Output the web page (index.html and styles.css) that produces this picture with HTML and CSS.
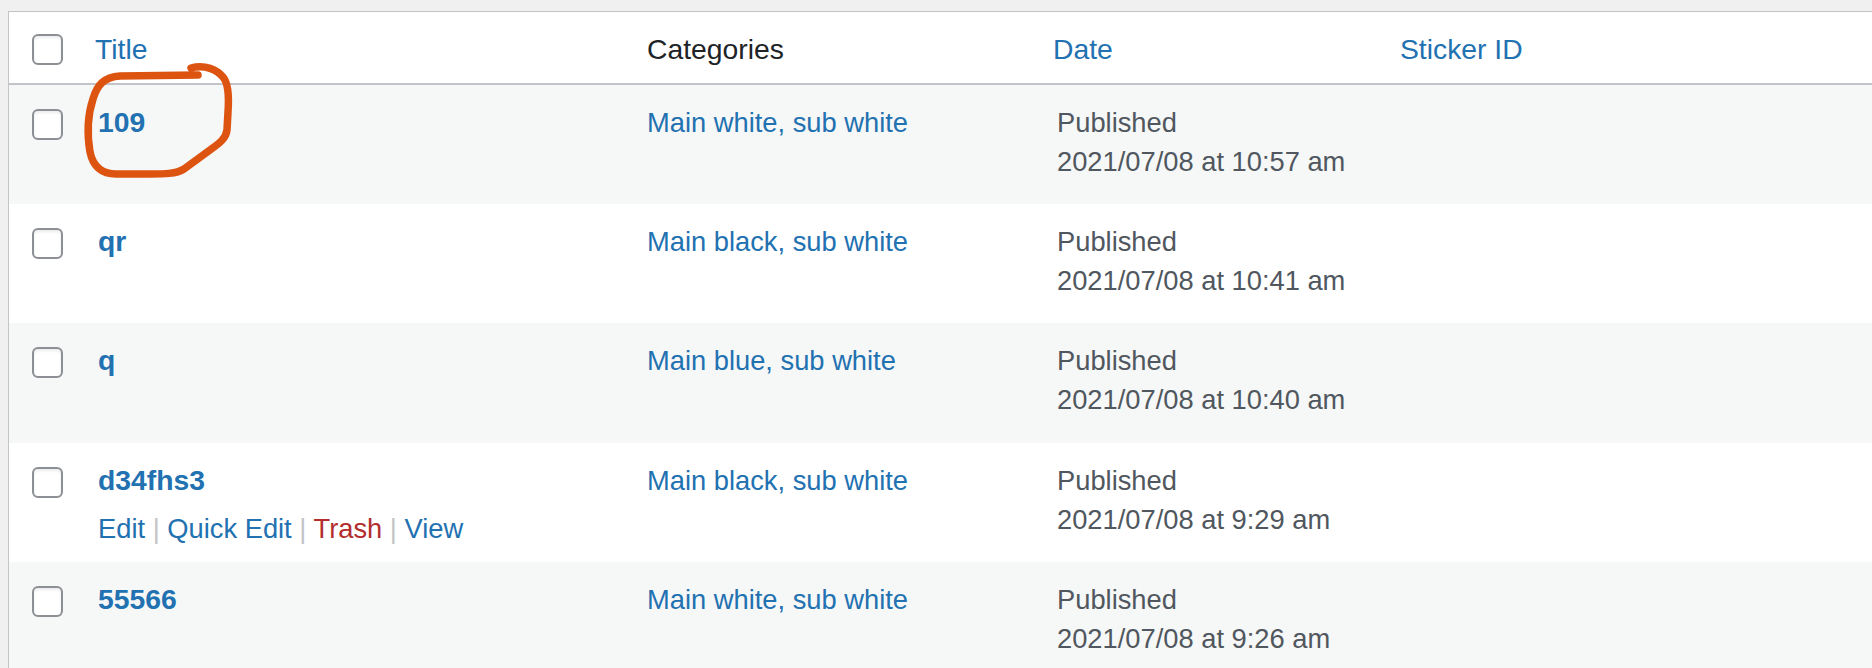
FILE: index.html
```html
<!DOCTYPE html>
<html lang="en">
<head>
    <meta charset="UTF-8">
    <title>Posts</title>
    <link rel="stylesheet" href="styles.css">
</head>
<body>
    <div class="wrap">
        <table class="posts">
            <colgroup>
                <col class="col-cb">
                <col class="col-title">
                <col class="col-cat">
                <col class="col-date">
                <col>
            </colgroup>
            <thead>
                <tr>
                    <th class="cb"><span class="checkbox"></span></th>
                    <th class="th-title"><a href="#">Title</a></th>
                    <th class="th-cat">Categories</th>
                    <th class="th-date"><a href="#">Date</a></th>
                    <th class="th-sticker"><a href="#">Sticker ID</a></th>
                </tr>
            </thead>
            <tbody>
                <tr class="alt">
                    <td class="cb"><span class="checkbox"></span></td>
                    <td class="title"><a class="row-title" href="#">109</a></td>
                    <td class="cat"><a href="#">Main white</a>, <a href="#">sub white</a></td>
                    <td class="date">Published<br>2021/07/08 at 10:57 am</td>
                    <td></td>
                </tr>
                <tr>
                    <td class="cb"><span class="checkbox"></span></td>
                    <td class="title"><a class="row-title" href="#">qr</a></td>
                    <td class="cat"><a href="#">Main black</a>, <a href="#">sub white</a></td>
                    <td class="date">Published<br>2021/07/08 at 10:41 am</td>
                    <td></td>
                </tr>
                <tr class="alt">
                    <td class="cb"><span class="checkbox"></span></td>
                    <td class="title"><a class="row-title" href="#">q</a></td>
                    <td class="cat"><a href="#">Main blue</a>, <a href="#">sub white</a></td>
                    <td class="date">Published<br>2021/07/08 at 10:40 am</td>
                    <td></td>
                </tr>
                <tr>
                    <td class="cb"><span class="checkbox"></span></td>
                    <td class="title">
                        <a class="row-title" href="#">d34fhs3</a>
                        <div class="row-actions">
                            <a href="#">Edit</a><span class="sep"> | </span><a href="#">Quick&nbsp;Edit</a><span class="sep"> | </span><a class="trash" href="#">Trash</a><span class="sep"> | </span><a href="#">View</a>
                        </div>
                    </td>
                    <td class="cat"><a href="#">Main black</a>, <a href="#">sub white</a></td>
                    <td class="date">Published<br>2021/07/08 at 9:29 am</td>
                    <td></td>
                </tr>
                <tr class="alt">
                    <td class="cb"><span class="checkbox"></span></td>
                    <td class="title"><a class="row-title" href="#">55566</a></td>
                    <td class="cat"><a href="#">Main white</a>, <a href="#">sub white</a></td>
                    <td class="date">Published<br>2021/07/08 at 9:26 am</td>
                    <td></td>
                </tr>
            </tbody>
        </table>
    </div>

    <!-- hand drawn marker around the first title -->
    <svg class="scribble" width="300" height="220" viewBox="0 0 300 220">
        <path d="M191 68 C205 64 217 70 223 77 C229 84 229 98 228 112 L227 130 C226 139 218 144 210 150 L184 169 C176 174 164 174 150 174 L116 174 C101 174 93 166 90 152 C87 134 88 114 93 99 C97 85 104 77 120 76 L198 75"
              fill="none" stroke="#dd5411" stroke-width="7.5" stroke-linecap="round" stroke-linejoin="round"/>
    </svg>
</body>
</html>
```

FILE: styles.css
```css
* {
    box-sizing: border-box;
}
body {
    margin: 0;
    background: #f0f0f1;
    font-family: "Liberation Sans", Arial, sans-serif;
    font-size: 27.3px;
    line-height: 39px;
    color: #50575e;
    position: relative;
    overflow: hidden;
}
a {
    color: #2271b1;
    text-decoration: none;
}
.wrap {
    margin: 11px 0 0 8px;
    background: #fff;
    border-top: 1px solid #c3c4c7;
    border-left: 1px solid #c3c4c7;
}
.posts {
    width: 100%;
    border-collapse: collapse;
    table-layout: fixed;
}
.col-cb {
    width: 79px;
}
.col-title {
    width: 549px;
}
.col-cat {
    width: 411px;
}
.col-date {
    width: 343px;
}
th {
    text-align: left;
    font-weight: 400;
    font-size: 28.3px;
    color: #1d2327;
    vertical-align: top;
    padding: 18px 0 14px 10px;
    border-bottom: 2px solid #c3c4c7;
}
th.th-title {
    padding-left: 7px;
}
th.th-date {
    padding-left: 5px;
}
th.th-sticker {
    padding-left: 9px;
}
td {
    vertical-align: top;
    padding: 18px 0 0 10px;
}
tbody tr {
    height: 119.5px;
}
tbody tr.alt {
    background: #f6f7f7;
}
th.cb,
td.cb {
    padding: 22px 0 0 23px;
}
td.cb {
    padding-top: 24px;
}
.checkbox {
    display: block;
    width: 31px;
    height: 31px;
    border: 2px solid #8c8f94;
    border-radius: 6px;
    background: #fff;
    box-shadow: inset 0 2px 3px rgba(0, 0, 0, 0.08);
}
.row-title {
    display: block;
    font-size: 28.3px;
    font-weight: 700;
    margin-bottom: 5px;
}
.row-actions {
    padding-top: 4px;
    white-space: nowrap;
}
.row-actions .sep {
    color: #c3c4c7;
}
.row-actions .trash {
    color: #b32d2e;
}
td.cat {
    color: #2271b1;
}
td.date {
    padding-left: 9px;
}
.scribble {
    position: absolute;
    left: 0;
    top: 0;
    pointer-events: none;
}
```
